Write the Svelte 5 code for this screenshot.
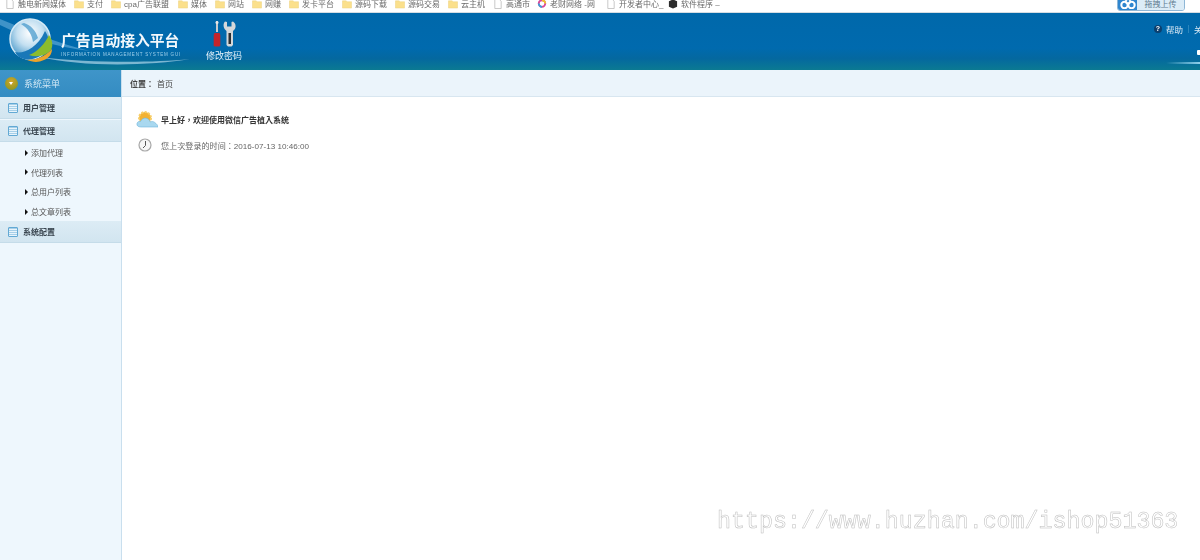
<script>
  const bookmarks = [
    { icon: 'page', label: '触电新闻媒体', w: 53 },
    { icon: 'folder', label: '支付', w: 21 },
    { icon: 'folder', label: 'cpa广告联盟', w: 51 },
    { icon: 'folder', label: '媒体', w: 21 },
    { icon: 'folder', label: '网站', w: 21 },
    { icon: 'folder', label: '网赚', w: 21 },
    { icon: 'folder', label: '发卡平台', w: 37 },
    { icon: 'folder', label: '源码下载', w: 37 },
    { icon: 'folder', label: '源码交易', w: 37 },
    { icon: 'folder', label: '云主机', w: 29 },
    { icon: 'page', label: '高通市', w: 28 },
    { icon: 'ring', label: '老财网络 -网', w: 53 },
    { icon: 'page', label: '开发者中心_', w: 46 },
    { icon: 'box', label: '软件程序 –', w: 40 }
  ];

  const subItems = ['添加代理', '代理列表', '总用户列表', '总文章列表'];
</script>

<div class="page">
  <div class="bookmarks">
    {#each bookmarks as b}
      <div class="bookmark">
        <svg class="bm-icon" width="10" height="10" viewBox="0 0 10 11">
          {#if b.icon === 'folder'}
            <path d="M0 2h4l1 1h5v7H0z" fill="#fbe08c" stroke="#ead07a" stroke-width=".5" />
          {:else if b.icon === 'page'}
            <path d="M1.500 .5h5l2 2v8h-7z" fill="#fff" stroke="#b4b4b4" stroke-width=".8" />
          {:else if b.icon === 'ring'}
            <circle cx="5" cy="5" r="3.600" fill="none" stroke="#d9489a" stroke-width="2" />
            <path d="M5 1.400a3.600 3.600 0 0 1 3.600 3.600" fill="none" stroke="#f0c030" stroke-width="2" />
            <path d="M5 8.600A3.600 3.600 0 0 1 1.400 5" fill="none" stroke="#3aa0d8" stroke-width="2" />
          {:else}
            <path d="M5 .5l4.500 2v6L5 10.500.5 8.500v-6z" fill="#2c2c2c" />
          {/if}
        </svg>
        <span class="bm-label" style="width: {b.w}px">{b.label}</span>
      </div>
    {/each}

    <div class="upload">
      <span class="upload-icon">
        <svg width="18" height="10" viewBox="0 0 18 10">
          <circle cx="5.500" cy="6" r="3.200" fill="none" stroke="#fff" stroke-width="2" />
          <circle cx="12.500" cy="6" r="3.200" fill="none" stroke="#fff" stroke-width="2" />
          <circle cx="9" cy="2.500" r="2.200" fill="none" stroke="#fff" stroke-width="1.500" />
        </svg>
      </span>
      <span class="upload-text">拖拽上传</span>
    </div>
  </div>

  <header class="header">
    <svg class="swoosh" width="620" height="57" viewBox="0 0 620 57">
      <path d="M0 6C30 18 55 30 90 38c-35-4-65-14-90-26z" fill="#8cc8ea" opacity=".45" />
      <path d="M40 44c50 6 110 6 150 2-40 7-110 8-150-2z" fill="#cbe8f7" opacity=".6" />
    </svg>
    <span class="streak"></span>

    <div class="brand">
      <svg class="globe" width="48" height="48" viewBox="0 0 48 48">
        <defs>
          <radialGradient id="sky" cx=".5" cy=".35" r=".65">
            <stop offset="0" stop-color="#ffffff" />
            <stop offset=".5" stop-color="#c4e0f1" />
            <stop offset="1" stop-color="#4a9acb" />
          </radialGradient>
        </defs>
        <circle cx="23" cy="21" r="20" fill="url(#sky)" stroke="#d5eaf6" stroke-width="1.500" />
        <path d="M8 34c8 2 22-3 30-21 4 6 5 12 3 17-5 8-14 13-24 11-4-1-7-3-9-7z" fill="#1a78b8" />
        <path d="M22 37c8-3 16-11 20-20 4 6 4 11 2 15-4 5-13 8-22 5z" fill="#8cbc2c" />
        <path d="M20 42c8 0 18-3 25-11 0 5-3 9-8 11-6 3-12 2-17 0z" fill="#eda32a" />
        <path d="M17 5c7 2 12 8 14 15l-5 4c-1-7-5-14-12-18z" fill="#3d94c9" opacity=".7" />
      </svg>
      <div class="brand-text">
        <div class="brand-title">广告自动接入平台</div>
        <div class="brand-sub">INFORMATION MANAGEMENT SYSTEM GUI</div>
      </div>
    </div>

    <div class="tool">
      <svg width="24" height="26" viewBox="0 0 24 26">
        <rect x="4" y="0" width="2" height="11" fill="#c8ccd0" />
        <circle cx="5" cy="1.500" r="1.500" fill="#e8e8e8" />
        <path d="M2.500 12h5l.8 2v10.500l-1 1h-4.600l-1-1V14z" fill="#c5242a" />
        <path d="M13 .5l2 .5v4.500h4.500V1L21 .5c3 2 3.500 6 1 8.500l-1 1v14l-1.500 1.500h-3.500L14.500 24V10l-1-1c-2.500-2.500-2.500-6.500-.5-8.500z" fill="#d4d8da" />
        <rect x="16.500" y="12" width="2.500" height="11" fill="#2b2f33" />
      </svg>
      <span class="tool-label">修改密码</span>
    </div>

    <div class="spacer"></div>

    <div class="top-links">
      <span class="help-icon">?</span>
      <span>帮助</span>
      <i class="sep"></i>
      <span class="close-link">关</span>
    </div>
    <span class="power-mark"></span>
  </header>

  <div class="body">
    <aside class="sidebar">
      <div class="side-head">
        <span class="side-head-icon"></span>
        <span>系统菜单</span>
      </div>

      <div class="group"><span class="list-icon"></span>用户管理</div>
      <div class="group"><span class="list-icon"></span>代理管理</div>
      <ul class="sub">
        {#each subItems as item}
          <li><span class="arrow"></span>{item}</li>
        {/each}
      </ul>
      <div class="group"><span class="list-icon"></span>系统配置</div>
    </aside>

    <main class="main">
      <div class="crumb"><b>位置：</b><span>首页</span></div>

      <div class="content">
        <div class="line greeting">
          <svg width="22" height="18" viewBox="0 0 22 18">
            <circle cx="9" cy="8" r="6" fill="#f3b233" stroke="#f7cf6a" stroke-width="2" stroke-dasharray="2 1.400" />
            <path d="M5 17c-3 0-4.500-1.500-4-3.500.4-1.500 2-2.500 3.500-2 1-2.500 3.500-4 6-3.300 2 .5 3.300 2 3.700 3.800 1-.7 3-.7 4.300.3 2 1.500 3.500 3 3.500 4.700z" fill="#a9d8ef" stroke="#6fb6dc" stroke-width=".6" />
          </svg>
          <b>早上好，欢迎使用微信广告植入系统</b>
        </div>
        <div class="line">
          <svg class="clock" width="14" height="14" viewBox="0 0 14 14">
            <circle cx="7" cy="7" r="6" fill="#f5f5f5" stroke="#a8a8a8" stroke-width="1.200" />
            <path d="M7.500 3v4.500L5 10" fill="none" stroke="#555" stroke-width="1" />
          </svg>
          <span class="last-login">您上次登录的时间：2016-07-13 10:46:00</span>
        </div>
      </div>
    </main>
  </div>

  <div class="watermark">https://www.huzhan.com/ishop51363</div>
</div>

<style>
  :global(body) {
    margin: 0;
    background: #fff;
  }
  .page {
    position: relative;
    width: 1200px;
    height: 560px;
    overflow: hidden;
    display: flex;
    flex-direction: column;
    font-family: "Liberation Sans", "Noto Sans CJK SC", sans-serif;
    color: #333;
    filter: blur(0.35px);
  }

  .bookmarks {
    height: 12px;
    padding-left: 5px;
    display: flex;
    align-items: flex-start;
    gap: 3px;
    background: #fff;
    border-bottom: 1px solid #d5dde3;
    position: relative;
    overflow: hidden;
    flex: none;
  }
  .bookmark {
    display: flex;
    align-items: flex-start;
    gap: 3px;
    height: 9px;
  }
  .bm-icon {
    flex: none;
    margin-top: -1px;
  }
  .bm-label {
    font-size: 8px;
    line-height: 9px;
    color: #6a6a6a;
    white-space: nowrap;
    display: inline-block;
  }
  .upload {
    position: absolute;
    left: 1117px;
    top: -3px;
    width: 68px;
    height: 14px;
    display: flex;
    border-radius: 3px;
    overflow: hidden;
    border: 1px solid #8fb7d6;
    box-sizing: border-box;
  }
  .upload-icon {
    width: 19px;
    background: #2f86cf;
    display: flex;
    align-items: center;
    justify-content: center;
  }
  .upload-text {
    flex: 1;
    background: #dcecf7;
    font-size: 8px;
    line-height: 10px;
    padding-top: 2px;
    text-align: center;
    color: #607b90;
  }

  .header {
    position: relative;
    height: 57px;
    flex: none;
    display: flex;
    overflow: hidden;
    background: linear-gradient(#0068aa 0%, #006aae 62%, #04689f 80%, #0b7a92 100%);
    color: #fff;
  }
  .swoosh {
    position: absolute;
    left: 0;
    top: 0;
  }
  .streak {
    position: absolute;
    right: 0;
    top: 49px;
    width: 34px;
    height: 2px;
    background: linear-gradient(90deg, transparent, #8fd0ea);
  }
  .brand {
    position: relative;
    display: flex;
    width: 205px;
    padding: 5px 0 0 7px;
    box-sizing: border-box;
    gap: 6px;
    flex: none;
  }
  .brand-title {
    margin-top: 14px;
    font-size: 14.800px;
    line-height: 18px;
    font-weight: 700;
    white-space: nowrap;
    color: #f2f8fc;
  }
  .brand-sub {
    margin-top: 2px;
    font-size: 4.500px;
    line-height: 6px;
    letter-spacing: 0.8px;
    white-space: nowrap;
    color: #9fd0ea;
  }
  .tool {
    position: relative;
    width: 38px;
    display: flex;
    flex-direction: column;
    align-items: center;
    padding-top: 8px;
    gap: 4px;
    flex: none;
  }
  .tool-label {
    font-size: 9px;
    line-height: 11px;
    white-space: nowrap;
    color: #e5f2fa;
  }
  .spacer {
    flex: 1;
  }
  .top-links {
    position: relative;
    display: flex;
    align-items: center;
    height: 11px;
    margin-top: 10px;
    gap: 4px;
    font-size: 8.500px;
    color: #dbeaf5;
    margin-right: -4px;
    width: 50px;
    flex: none;
    white-space: nowrap;
  }
  .help-icon {
    width: 8px;
    height: 8px;
    border-radius: 50%;
    background: #0b3f6e;
    font-size: 7px;
    font-weight: 700;
    line-height: 8px;
    text-align: center;
    color: #fff;
    flex: none;
  }
  .sep {
    width: 1px;
    height: 8px;
    margin: 0 1px;
    background: #2b86bd;
    flex: none;
  }
  .power-mark {
    position: absolute;
    right: 0;
    top: 37px;
    width: 3px;
    height: 5px;
    background: #fff;
    border-radius: 1px 0 0 1px;
  }

  .body {
    flex: 1;
    display: flex;
    min-height: 0;
  }
  .sidebar {
    width: 122px;
    flex: none;
    background: #eef7fd;
    border-right: 1px solid #c9dfee;
    box-sizing: border-box;
  }
  .side-head {
    height: 27px;
    display: flex;
    align-items: center;
    gap: 6px;
    padding-left: 5px;
    background: linear-gradient(#3f95c9, #348cc2);
    color: #cfe6f4;
    font-size: 9px;
  }
  .side-head-icon {
    width: 13px;
    height: 13px;
    border-radius: 50%;
    background: radial-gradient(circle at 50% 35%, #d2a52a, #7d9420);
    position: relative;
  }
  .side-head-icon::after {
    content: "";
    position: absolute;
    left: 4px;
    top: 5px;
    border: 2.500px solid transparent;
    border-top: 3px solid #fff;
    border-bottom: 0;
  }
  .group {
    height: 22px;
    box-sizing: border-box;
    margin-bottom: 1px;
    display: flex;
    align-items: center;
    gap: 5px;
    padding-left: 8px;
    background: linear-gradient(#dcecf5, #d2e5f0);
    border-bottom: 1px solid #c5dce9;
    font-size: 8px;
    font-weight: 700;
    color: #3a4650;
  }
  .list-icon {
    width: 8px;
    height: 8px;
    border: 1px solid #62a9d4;
    border-radius: 1px;
    background: repeating-linear-gradient(#a6cfe8 0 1px, #e8f4fb 1px 2px);
  }
  .sub {
    list-style: none;
    margin: 0;
    padding: 0;
  }
  .sub li {
    height: 19.600px;
    display: flex;
    align-items: center;
    gap: 3px;
    padding-left: 25px;
    font-size: 8px;
    color: #555;
  }
  .arrow {
    border-left: 3px solid #111;
    border-top: 3px solid transparent;
    border-bottom: 3px solid transparent;
  }

  .main {
    flex: 1;
    min-width: 0;
  }
  .crumb {
    height: 26px;
    display: flex;
    align-items: center;
    gap: 3px;
    padding-left: 8px;
    background: #ebf4fb;
    border-bottom: 1px solid #d8e6f0;
    font-size: 8px;
    color: #444;
    font-family: "Liberation Sans", "Noto Sans CJK TC", sans-serif;
  }
  .content {
    padding-top: 13px;
    padding-left: 14px;
    font-family: "Liberation Sans", "Noto Sans CJK TC", sans-serif;
  }
  .line {
    display: flex;
    align-items: center;
    gap: 9px;
    height: 18px;
    margin-bottom: 8px;
    font-size: 8px;
    color: #666;
  }
  .greeting {
    gap: 3px;
    color: #333;
  }
  .last-login {
    font-size: 8.100px;
  }
  .clock {
    margin: 0 0 0 2px;
  }
  .watermark {
    position: absolute;
    left: 717px;
    top: 508px;
    font-family: "Liberation Mono", monospace;
    font-size: 23.300px;
    line-height: 28px;
    white-space: nowrap;
    color: #fff;
    -webkit-text-stroke: 0.5px #bcbcbc;
  }
</style>
